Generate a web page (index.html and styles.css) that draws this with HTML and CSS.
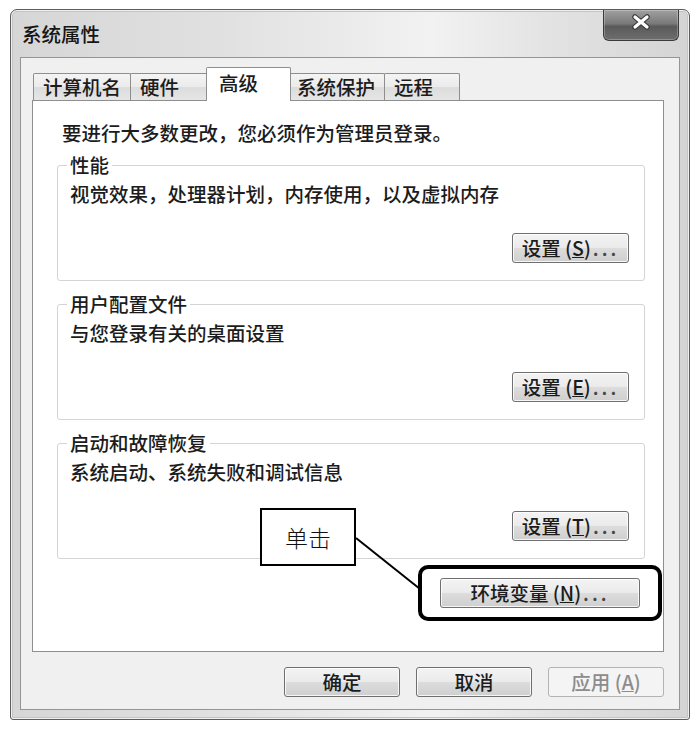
FILE: index.html
```html
<!DOCTYPE html>
<html lang="zh-CN">
<head>
<meta charset="utf-8">
<title>系统属性</title>
<link rel="stylesheet" href="styles.css">
</head>
<body>
<div class="window">
  <div class="titlebar">
    <span class="title">系统属性</span>
    <div class="close">
      <svg width="20" height="16" viewBox="0 0 20 16"><path d="M4 3 L16 13 M16 3 L4 13" stroke="#3a3a3a" stroke-width="5.5" stroke-linecap="round"/><path d="M4 3 L16 13 M16 3 L4 13" stroke="#ffffff" stroke-width="3.2" stroke-linecap="round"/></svg>
    </div>
  </div>
  <div class="client">
    <div class="tabs">
      <div class="tab t1">计算机名</div>
      <div class="tab t2">硬件</div>
      <div class="tab sel">高级</div>
      <div class="tab t4">系统保护</div>
      <div class="tab t5">远程</div>
    </div>
    <div class="panel">
      <p class="intro">要进行大多数更改，您必须作为管理员登录。</p>
      <fieldset class="group">
        <legend>性能</legend>
        <p class="desc">视觉效果，处理器计划，内存使用，以及虚拟内存</p>
        <div class="btnrow"><button class="btn">设置 (<u>S</u>)<span class="dots">...</span></button></div>
      </fieldset>
      <fieldset class="group">
        <legend>用户配置文件</legend>
        <p class="desc">与您登录有关的桌面设置</p>
        <div class="btnrow"><button class="btn">设置 (<u>E</u>)<span class="dots">...</span></button></div>
      </fieldset>
      <fieldset class="group">
        <legend>启动和故障恢复</legend>
        <p class="desc">系统启动、系统失败和调试信息</p>
        <div class="btnrow"><button class="btn">设置 (<u>T</u>)<span class="dots">...</span></button></div>
      </fieldset>
      <div class="envrow"><button class="btn env">环境变量 (<u>N</u>)<span class="dots">...</span></button></div>
    </div>
    <div class="footer">
      <button class="btn">确定</button>
      <button class="btn">取消</button>
      <button class="btn" disabled>应用 (<u>A</u>)</button>
    </div>
  </div>
</div>
<div class="callout">单击</div>
<svg class="leader" width="698" height="729" viewBox="0 0 698 729"><line x1="356" y1="538" x2="420" y2="589" stroke="#000" stroke-width="2"/></svg>
<div class="highlight"></div>
</body>
</html>
```
FILE: styles.css
```css
* { box-sizing: border-box; }
html, body { margin: 0; }
body {
  background: #fff;
  font-family: "Noto Sans CJK SC", "Microsoft YaHei", sans-serif;
  font-size: 19.5px;
  font-weight: 500;
  color: #1c1c1c;
  padding: 9px 0 0 10px;
  width: 698px;
  height: 729px;
  overflow: hidden;
  position: relative;
}
.window {
  width: 680px;
  height: 711px;
  border: 1px solid #5c5c5c;
  border-radius: 7px 7px 3px 3px;
  background: linear-gradient(90deg, #d6d6d6 0%, #e0e0e0 30%, #f2f2f2 62%, #e4e4e4 78%, #d4d4d4 100%);
  box-shadow: inset 0 0 0 1px rgba(255,255,255,0.75), inset 0 0 0 2px #c4c4c4;
  padding: 0 9px 9px;
  display: flex;
  flex-direction: column;
}
.titlebar {
  height: 47px;
  display: flex;
  justify-content: space-between;
  align-items: flex-start;
}
.title {
  padding: 12px 0 0 2px;
  line-height: 24px;
  color: #151515;
}
.close {
  width: 76px;
  height: 31px;
  margin-right: 1px;
  border: 1px solid #3a3a3a;
  border-top: none;
  border-radius: 0 0 6px 6px;
  background: linear-gradient(#a0a0a0 0%, #7a7a7a 45%, #5a5a5a 55%, #6e6e6e 100%);
  box-shadow: inset 0 0 0 1px rgba(255,255,255,0.25);
  display: flex;
  justify-content: center;
  align-items: center;
  padding-bottom: 7px;
}
.client {
  flex: 1;
  border: 1px solid #959595;
  background: #f0f0f0;
  padding: 9px 15px 12px 11px;
  display: flex;
  flex-direction: column;
}
.tabs {
  height: 33px;
  display: flex;
  align-items: flex-end;
  padding-left: 1px;
}
.tab {
  height: 27px;
  border: 1px solid #8e8e8e;
  border-bottom: none;
  border-radius: 2px 2px 0 0;
  margin-left: -1px;
  padding-left: 9px;
  line-height: 26px;
  background: linear-gradient(#f4f4f4 0%, #ebebeb 50%, #dcdcdc 52%, #e6e6e6 100%);
  white-space: nowrap;
}
.t1 { width: 98px; margin-left: 0; }
.t2 { width: 78px; }
.sel {
  width: 85px;
  height: 34px;
  margin: 0 -1px -1px -2px;
  padding-left: 12px;
  line-height: 30px;
  background: #fff;
  position: relative;
  z-index: 1;
}
.t4 { width: 96px; padding-left: 7px; }
.t5 { width: 76px; }
.panel {
  flex: 1;
  background: #fff;
  border: 1px solid #8e8e8e;
  padding: 20px 18px 0 24px;
}
.intro {
  margin: 0 0 8px 5px;
  line-height: 24px;
}
.group {
  margin: 0;
  min-width: 0;
  border: 1px solid #d4d4d4;
  border-radius: 3px;
  padding: 5px 15px 17px 12px;
}
.group + .group { margin-top: 11px; }
.group legend {
  padding: 0 3px;
  margin-left: -3px;
  line-height: 24px;
}
.desc {
  margin: 0;
  line-height: 24px;
}
.btnrow {
  display: flex;
  justify-content: flex-end;
  margin-top: 27px;
}
.btn {
  font-family: inherit;
  font-size: 19.5px;
  font-weight: 500;
  color: #1c1c1c;
  width: 117px;
  height: 30px;
  padding: 0;
  border: 1px solid #6f6f6f;
  border-radius: 3px;
  background: linear-gradient(#f3f3f3 0%, #ebebeb 48%, #dcdcdc 52%, #cfcfcf 100%);
  box-shadow: inset 0 0 0 1px rgba(255,255,255,0.8);
  display: flex;
  align-items: center;
  justify-content: center;
  line-height: 28px;
  white-space: pre;
}
.dots {
  letter-spacing: 3px;
  margin-left: 2px;
  color: #444;
}
.btn:disabled {
  color: #8c8c8c;
  border-color: #b3b3b3;
  background: #f4f4f4;
  box-shadow: none;
}
.envrow {
  display: flex;
  justify-content: flex-end;
  margin: 19px 5px 0 0;
}
.env { width: 200px; }
.footer {
  margin-top: 15px;
  display: flex;
  justify-content: flex-end;
  gap: 16px;
}
.footer .btn { width: 116px; }
.callout {
  position: absolute;
  left: 260px;
  top: 508px;
  width: 96px;
  height: 58px;
  border: 2px solid #000;
  background: #fff;
  font-size: 23px;
  font-weight: 300;
  color: #111;
  display: flex;
  align-items: center;
  justify-content: center;
}
.leader {
  position: absolute;
  left: 0;
  top: 0;
  pointer-events: none;
}
.highlight {
  position: absolute;
  left: 418px;
  top: 565px;
  width: 244px;
  height: 56px;
  border: 4px solid #000;
  border-radius: 10px;
}
```
